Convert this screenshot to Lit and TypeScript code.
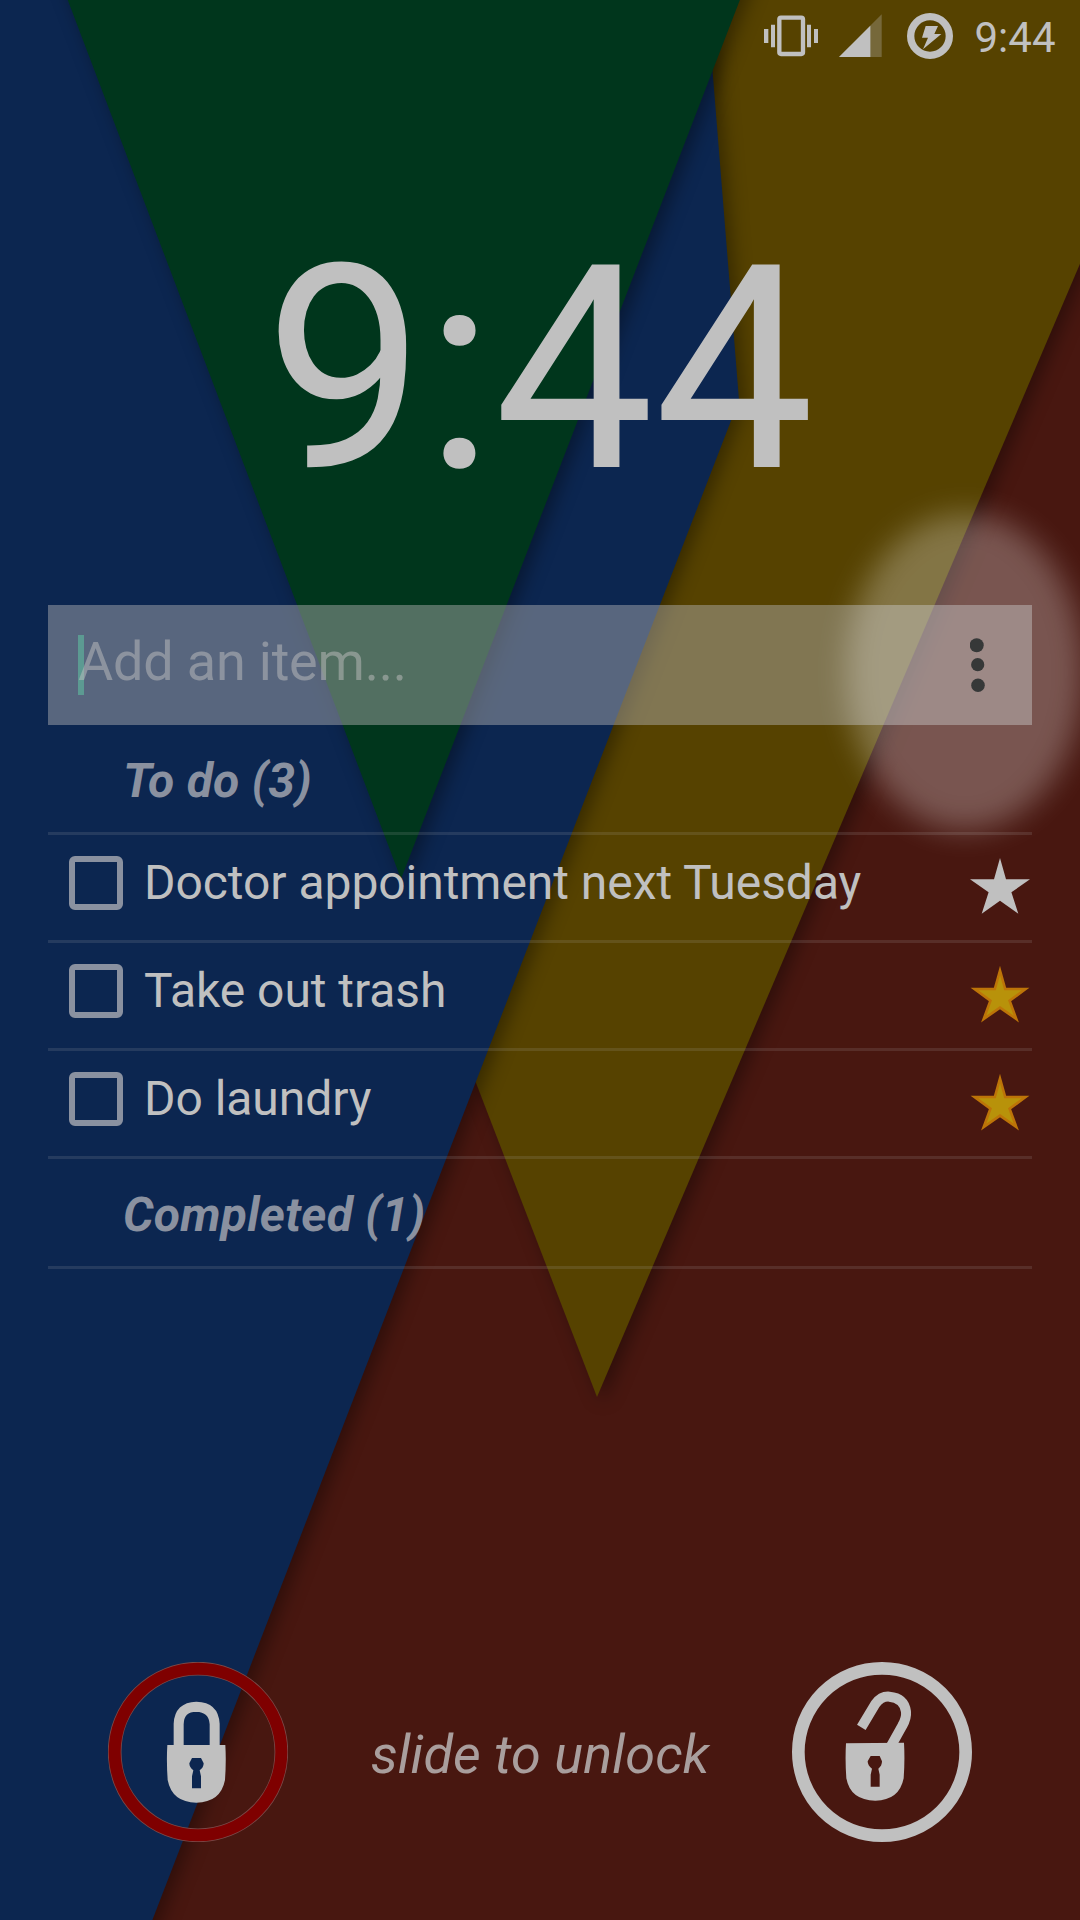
import { LitElement, html, css, svg } from "lit";
import { customElement, property } from "lit/decorators.js";

interface Task {
  title: string;
  starred: boolean;
}

@customElement("wall-paper")
class WallPaper extends LitElement {
  static styles = css`
    :host { display: block; }
    .art { display: block; width: 1080px; height: 1920px; }
  `;
  render() {
    return html`<svg class="art" viewBox="0 0 1080 1920">
      <defs>
        <filter id="soft" filterUnits="userSpaceOnUse" x="-100" y="-200" width="1280" height="2300" color-interpolation-filters="sRGB">
          <feDropShadow dx="6" dy="5" stdDeviation="9" flood-color="#000" flood-opacity="0.36" />
        </filter>
      </defs>
      <rect width="1080" height="1920" fill="#481710" />
      <polygon points="660,-60 1218,-60 597,1397 186,330" fill="#564200" filter="url(#soft)" />
      <polygon points="-60,-60 702,-60 739,400 135,1965 -60,1965" fill="#0c2650" filter="url(#soft)" />
      <polygon points="45,-60 763,-60 401,879" fill="#00361c" filter="url(#soft)" />
    </svg>`;
  }
}

@customElement("status-bar")
class StatusBar extends LitElement {
  static styles = css`
    :host { display: flex; justify-content: flex-end; align-items: flex-start; height: 72px; padding-right: 24.5px; box-sizing: border-box; }
    .icon { display: block; height: 72px; flex: none; fill: #c0c0c0; }
    .vibrate { width: 54px; margin-right: 21.3px; }
    .signal { width: 42.7px; margin-right: 25px; }
    .battery { width: 46px; margin-right: 22px; }
    .time { font-size: 42px; line-height: 75px; color: #c0c0c0; }
  `;
  render() {
    return html`
      <svg class="icon vibrate" viewBox="72 0 162 216">
        <path d="M72 87h13v42H72zM93 74h12v68H93zM201 74h12v68h-12zM222 87h12v42h-12z" />
        <rect x="118" y="53" width="71" height="109" rx="5" fill="none" stroke="#c0c0c0" stroke-width="13" />
      </svg>
      <svg class="icon signal" viewBox="298 0 128 216">
        <path d="M298 171L426 43V171z" opacity="0.3" />
        <path d="M298 171L392 77V171z" />
      </svg>
      <svg class="icon battery" viewBox="501 0 138 216">
        <circle cx="570" cy="108" r="58" fill="none" stroke="#c0c0c0" stroke-width="22" />
        <path d="M557 78H594L583 102H604L549 148L564 113H546z" />
      </svg>
      <span class="time">9:44</span>
    `;
  }
}

@customElement("task-row")
class TaskRow extends LitElement {
  @property({ attribute: false }) task!: Task;
  static styles = css`
    :host { display: flex; align-items: flex-start; height: 108px; box-sizing: border-box; padding-left: 21px; border-bottom: 3px solid rgba(192, 192, 192, 0.14); }
    .box { flex: none; width: 54px; height: 54px; margin-top: 21px; box-sizing: border-box; border: 6px solid #8a91a0; border-radius: 6px; }
    .title { flex: 1; margin-left: 21px; font-size: 48px; line-height: 56px; padding-top: 20px; letter-spacing: -0.05px; color: #c0c0c0; white-space: nowrap; }
    .star { flex: none; width: 64px; height: 60px; margin-top: 21px; display: block; }
    .plain { fill: #c0c0c0; }
    .gold { fill: #b8920a; stroke: #bd7408; stroke-width: 2.6; }
  `;
  render() {
    return html`
      <span class="box"></span>
      <span class="title">${this.task.title}</span>
      <svg class="star" viewBox="968 856 64 60">
        ${this.task.starred
          ? svg`<polygon class="gold" points="1000,862.5 1005.2,881 1025.5,881 1009.6,892.8 1016.3,911 1000,899.6 983.7,911 990.4,892.8 974.5,881 994.8,881" />`
          : svg`<polygon class="plain" points="1000,858 1006,879.3 1030,879.3 1011.4,892.3 1018.3,913.7 1000,900.7 981.7,913.7 988.6,892.3 970,879.3 994,879.3" />`}
      </svg>
    `;
  }
}

@customElement("app-root")
class AppRoot extends LitElement {
  private tasks: Task[] = [
    { title: "Doctor appointment next Tuesday", starred: false },
    { title: "Take out trash", starred: true },
    { title: "Do laundry", starred: true },
  ];

  static styles = css`
    :host { display: block; width: 1080px; height: 1920px; position: relative; overflow: hidden; background: #47160f; font-family: Roboto, sans-serif; color: #c0c0c0; }
    .backdrop { position: absolute; inset: 0; }
    .screen { position: relative; display: flex; flex-direction: column; height: 1920px; }
    .clock { height: 533px; font-size: 285px; line-height: 334px; padding: 131px 1px 0 0; box-sizing: border-box; text-align: center; }
    .panel { margin: 0 48px; display: flex; flex-direction: column; }
    .entry { display: flex; align-items: center; height: 120px; padding-left: 30px; padding-right: 46px; background: rgba(182, 182, 182, 0.45); }
    .caret { width: 6px; height: 60px; background: #5c9a92; margin-right: -6px; }
    .hint { flex: 1; font-size: 54px; line-height: 64px; margin-top: -7px; letter-spacing: -0.2px; color: rgba(192, 192, 192, 0.5); position: relative; }
    .more { width: 16px; height: 56px; display: block; fill: #363838; position: relative; z-index: 2; }
    .heading { font-size: 48px; font-weight: 700; font-style: italic; letter-spacing: 0.25px; color: #8a91a0; line-height: 56px; padding-left: 75px; box-sizing: border-box; border-bottom: 3px solid rgba(192, 192, 192, 0.14); }
    .todo { height: 110px; padding-top: 28px; }
    .done { height: 110px; padding-top: 28px; }
    .glow { position: absolute; left: 780px; top: 450px; width: 300px; height: 440px; display: block; pointer-events: none; }
    .slider { margin-top: 393px; padding: 0 108px; display: flex; align-items: center; justify-content: space-between; height: 180px; }
    .lock { width: 180px; height: 180px; display: block; }
    .slide { font-size: 54px; font-style: italic; letter-spacing: 0.1px; color: #a99e9d; padding-top: 5px; }
  `;

  render() {
    return html`
      <wall-paper class="backdrop"></wall-paper>
      <div class="screen">
        <status-bar></status-bar>
        <div class="clock">9:44</div>
        <div class="panel">
          <div class="entry">
            <span class="caret"></span>
            <span class="hint">Add an item...</span>
            <svg class="more" viewBox="970 637 16 56">
              <circle cx="976.7" cy="645.2" r="7" />
              <circle cx="977.7" cy="664.7" r="6.6" />
              <circle cx="978" cy="685.3" r="6.8" />
            </svg>
          </div>
          <div class="heading todo">To do (3)</div>
          ${this.tasks.map((task) => html`<task-row .task=${task}></task-row>`)}
          <div class="heading done">Completed (1)</div>
        </div>
        <div class="slider">
          <svg class="lock" viewBox="54 66 540 540">
            <circle cx="324" cy="336" r="250" fill="none" stroke="#7b4a49" stroke-width="41" />
            <circle cx="324" cy="336" r="250" fill="none" stroke="#7f0000" stroke-width="36" />
            <path d="M266 320V252Q268 201 319 200Q371 201 374 252V320" fill="none" stroke="#c0c0c0" stroke-width="30" />
            <path fill="#c0c0c0" fill-rule="evenodd" d="M232 315H406Q409 365 405 420Q392 487 319 488Q246 487 233 420Q229 365 232 315zM306 354L298 370Q298 382 310 391L306 409V445H333V409L329 391Q341 383 341 370L333 354z" />
          </svg>
          <span class="slide">slide to unlock</span>
          <svg class="lock" viewBox="66 66 540 540">
            <circle cx="336" cy="336" r="251" fill="none" stroke="#c0c0c0" stroke-width="38" />
            <path d="M274 262L316 192Q334 168 358 170Q403 174 408 215Q410 235 397 257L364 316" fill="none" stroke="#c0c0c0" stroke-width="30" />
            <path fill="#c0c0c0" fill-rule="evenodd" d="M228 310L402 308Q405 360 401 415Q388 481 316 482Q241 481 229 415Q225 360 228 310zM302 348L293 364Q293 377 306 386L302 404V440H329V404L325 386Q336 378 336 364L329 348z" />
          </svg>
        </div>
      </div>
      <svg class="glow" viewBox="780 450 300 440">
        <defs>
          <filter id="haze" filterUnits="userSpaceOnUse" x="750" y="430" width="430" height="500" color-interpolation-filters="sRGB">
            <feGaussianBlur stdDeviation="15" />
          </filter>
        </defs>
        <ellipse cx="965" cy="672" rx="119" ry="158" fill="#fff" fill-opacity="0.27" filter="url(#haze)" />
      </svg>
    `;
  }
}
